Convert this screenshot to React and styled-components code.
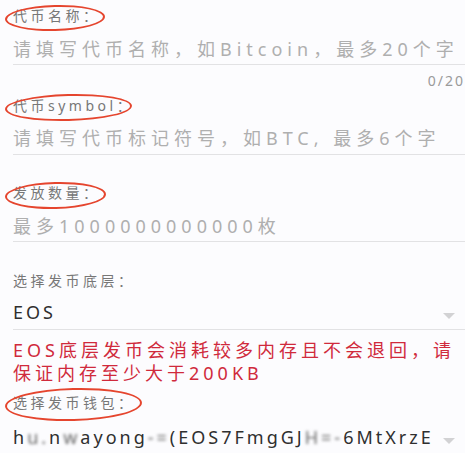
import React from "react";
import styled, { createGlobalStyle, css } from "styled-components";

const GlobalStyle = createGlobalStyle`
  html, body {
    margin: 0;
    padding: 0;
    background: #fcfcfe;
    overflow: hidden;
  }
  * {
    box-sizing: border-box;
  }
`;

const FONT = `"Noto Sans", "Noto Sans CJK SC", sans-serif`;

const Page = styled.div`
  width: 484px;
  padding: 6px 13px 0;
  font-family: ${FONT};
  background: #fcfcfe;
`;

const Field = styled.div`
  display: flex;
  flex-direction: column;
  padding-bottom: ${props => props.$gap}px;
`;

const Label = styled.div`
  position: relative;
  font-size: 14px;
  line-height: 20px;
  letter-spacing: 3.5px;
  color: #777;
  white-space: nowrap;

  ${props =>
    props.$ring &&
    css`
      &::before {
        content: "";
        position: absolute;
        left: -8px;
        top: ${props.$ring.top}px;
        width: ${props.$ring.w}px;
        height: ${props.$ring.h}px;
        border: 2.5px solid #e5452e;
        border-radius: 50%;
        transform: rotate(-1.5deg);
        pointer-events: none;
      }
    `};
`;

const Input = styled.input`
  display: block;
  width: 100%;
  border: none;
  border-bottom: 1px solid #e2e2e4;
  background: transparent;
  padding: ${props => props.$top ?? 8}px 0 0;
  height: 39px;
  line-height: 30px;
  font-family: ${FONT};
  font-size: 18px;
  letter-spacing: 5px;
  color: #333;
  outline: none;

  &::placeholder {
    color: #afafaf;
  }
`;

const Counter = styled.div`
  margin: 8px 6px 0 0;
  text-align: right;
  font-size: 14px;
  line-height: 16px;
  letter-spacing: 2px;
  color: #9a9a9a;
`;

const Select = styled.div`
  display: flex;
  align-items: center;
  justify-content: space-between;
  padding: ${props => props.$top}px 0 2px;
  border-bottom: 1px solid #e2e2e4;
`;

const Value = styled.div`
  font-size: 18px;
  line-height: 30px;
  letter-spacing: 3px;
  color: #2f2f2f;
  white-space: nowrap;
`;

const Mosaic = styled.span`
  filter: blur(1.4px);
  color: #666;
`;

const Caret = styled.span`
  flex-shrink: 0;
  width: 0;
  height: 0;
  margin: 7px 16px 0 0;
  border-left: 6.5px solid transparent;
  border-right: 6.5px solid transparent;
  border-top: 6px solid #d2d2d4;
`;

const Warning = styled.p`
  margin: 9px 0 8px;
  font-size: 18px;
  line-height: 23px;
  letter-spacing: 4px;
  color: #d02a3c;
  white-space: nowrap;
`;

const App = () => (
  <Page>
    <GlobalStyle />

    <Field $gap={7}>
      <Label $ring={{ top: -1, w: 96, h: 22 }}>代币名称：</Label>
      <Input placeholder="请填写代币名称，如Bitcoin，最多20个字" />
      <Counter>0/20</Counter>
    </Field>

    <Field $gap={28}>
      <Label $ring={{ top: -2, w: 123, h: 23 }}>代币symbol：</Label>
      <Input $top={5} placeholder="请填写代币标记符号，如BTC, 最多6个字" />
    </Field>

    <Field $gap={29}>
      <Label $ring={{ top: -1, w: 97, h: 23 }}>发放数量：</Label>
      <Input placeholder="最多1000000000000枚" />
    </Field>

    <Field $gap={0}>
      <Label>选择发币底层：</Label>
      <Select $top={6}>
        <Value>EOS</Value>
        <Caret />
      </Select>
    </Field>

    <Warning>
      EOS底层发币会消耗较多内存且不会退回，请
      <br />
      保证内存至少大于200KB
    </Warning>

    <Field $gap={0}>
      <Label $ring={{ top: -5, w: 133, h: 29 }}>选择发币钱包：</Label>
      <Select $top={9}>
        <Value>
          h<Mosaic>u.</Mosaic>n<Mosaic>w</Mosaic>ayong<Mosaic>-=</Mosaic>(EOS7FmgGJ
          <Mosaic>H=-</Mosaic>6MtXrzE
        </Value>
        <Caret />
      </Select>
    </Field>
  </Page>
);

export default App;
